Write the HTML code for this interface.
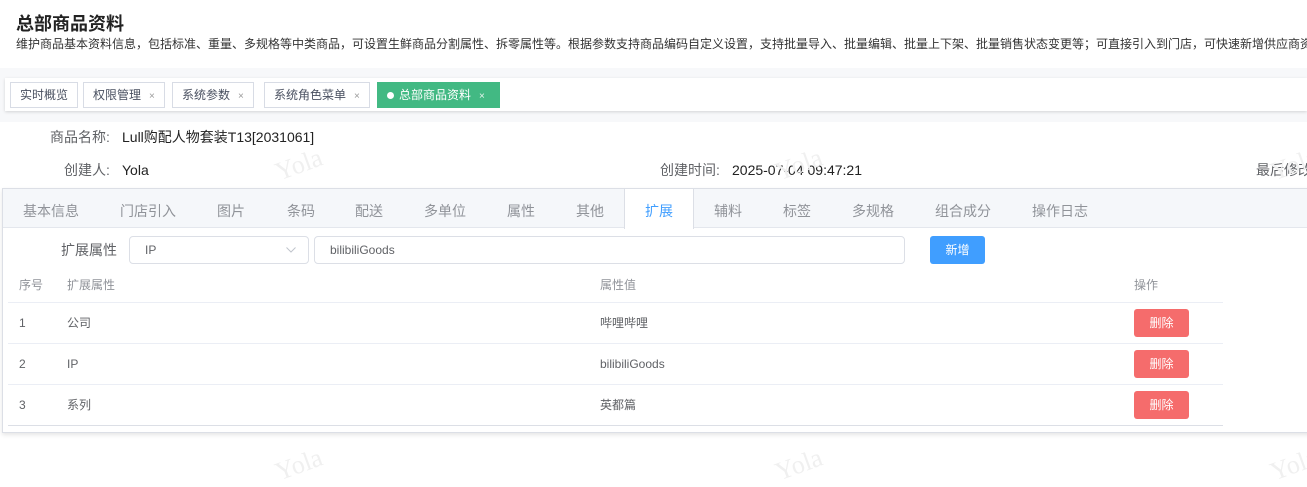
<!DOCTYPE html>
<html><head><meta charset="utf-8"><style>
*{box-sizing:border-box;margin:0;padding:0}
body{width:1307px;height:483px;overflow:hidden;background:#fff;font-family:"Liberation Sans","Noto Sans CJK SC",sans-serif;position:relative;color:#333}
.abs{position:absolute;white-space:nowrap}
.wm{position:absolute;color:#f0f0f0;font-family:"Liberation Serif",serif;font-size:26px;transform:rotate(-20deg)}
.tag{position:absolute;top:82px;height:26px;border:1px solid #d8dce5;background:#fff;font-size:12px;line-height:24px;padding:0 9px;color:#495060;white-space:nowrap}
.tag i{font-style:normal;font-size:10px;color:#999;margin-left:8px}
.tab{position:absolute;top:201px;font-size:14px;color:#909399;white-space:nowrap}
.th{font-size:12px;color:#909399;line-height:16px}
.td{font-size:12px;color:#606266;line-height:16px;height:16px}
.line{position:absolute;left:8px;width:1215px;height:1px;background:#ebeef5}
.del{position:absolute;left:1134px;width:55px;height:28px;background:#f56c6c;border-radius:3px;color:#fff;font-size:12px;line-height:28px;text-align:center}
.lbl{position:absolute;white-space:nowrap;font-size:14px;color:#606266;line-height:20px;height:20px}
.val{position:absolute;white-space:nowrap;font-size:14px;color:#222;line-height:20px;height:20px}
</style></head><body>
<div class="abs" style="left:16px;top:10px;font-size:18px;font-weight:bold;color:#222">总部商品资料</div>
<div class="abs" style="left:16px;top:35px;font-size:12px;color:#333">维护商品基本资料信息，包括标准、重量、多规格等中类商品，可设置生鲜商品分割属性、拆零属性等。根据参数支持商品编码自定义设置，支持批量导入、批量编辑、批量上下架、批量销售状态变更等；可直接引入到门店，可快速新增供应商资料</div>
<div class="abs" style="left:0;top:68px;width:1307px;height:54px;background:#f7f8fa"></div>
<div class="abs" style="left:5px;top:78px;width:1302px;height:33px;background:#fff;box-shadow:0 1px 3px rgba(0,0,0,.15)"></div>
<div class="tag" style="left:10px">实时概览</div>
<div class="tag" style="left:83px">权限管理<i>×</i></div>
<div class="tag" style="left:172px">系统参数<i>×</i></div>
<div class="tag" style="left:264px">系统角色菜单<i>×</i></div>
<div class="tag" style="left:377px;width:123px;background:#42b983;border-color:#42b983;color:#fff"><span style="display:inline-block;width:7px;height:7px;border-radius:50%;background:#fff;margin-right:5px"></span>总部商品资料<i style="color:#e8f5ee">×</i></div>
<div class="lbl" style="left:50px;top:127px">商品名称:</div><div class="val" style="left:122px;top:127px">Lull购配人物套装T13[2031061]</div>
<div class="lbl" style="left:64px;top:160px">创建人:</div><div class="val" style="left:122px;top:160px">Yola</div>
<div class="lbl" style="left:660px;top:160px">创建时间:</div><div class="val" style="left:732px;top:160px">2025-07-04 09:47:21</div>
<div class="lbl" style="left:1256px;top:160px">最后修改</div>
<div class="abs" style="left:2px;top:188px;width:1310px;height:245px;border:1px solid #dcdfe6;box-shadow:0 2px 4px rgba(0,0,0,.1);background:#fff"></div>
<div class="abs" style="left:3px;top:189px;width:1310px;height:39px;background:#f5f7fa;border-bottom:1px solid #e4e7ed"></div>
<div class="abs" style="left:624px;top:189px;width:70px;height:40px;background:#fff;border-left:1px solid #dcdfe6;border-right:1px solid #dcdfe6"></div>
<div class="tab" style="left:23px">基本信息</div>
<div class="tab" style="left:120px">门店引入</div>
<div class="tab" style="left:217px">图片</div>
<div class="tab" style="left:287px">条码</div>
<div class="tab" style="left:355px">配送</div>
<div class="tab" style="left:424px">多单位</div>
<div class="tab" style="left:507px">属性</div>
<div class="tab" style="left:576px">其他</div>
<div class="tab" style="left:645px;color:#409eff">扩展</div>
<div class="tab" style="left:714px">辅料</div>
<div class="tab" style="left:783px">标签</div>
<div class="tab" style="left:852px">多规格</div>
<div class="tab" style="left:935px">组合成分</div>
<div class="tab" style="left:1032px">操作日志</div>
<div class="abs" style="left:61px;top:240px;font-size:14px;color:#606266">扩展属性</div>
<div class="abs" style="left:129px;top:236px;width:180px;height:28px;border:1px solid #dcdfe6;border-radius:4px;font-size:12px;line-height:26px;padding-left:15px;color:#606266">IP<svg style="position:absolute;right:12px;top:10px" width="10" height="6" viewBox="0 0 10 6"><path d="M0.5 0.5L5 5L9.5 0.5" fill="none" stroke="#c0c4cc" stroke-width="1"/></svg></div>
<div class="abs" style="left:314px;top:236px;width:591px;height:28px;border:1px solid #dcdfe6;border-radius:4px;font-size:12px;line-height:26px;padding-left:15px;color:#606266">bilibiliGoods</div>
<div class="abs" style="left:930px;top:236px;width:55px;height:28px;background:#409eff;border-radius:3px;color:#fff;font-size:12px;line-height:28px;text-align:center">新增</div>
<div class="abs th" style="left:19px;top:277px">序号</div>
<div class="abs th" style="left:67px;top:277px">扩展属性</div>
<div class="abs th" style="left:600px;top:277px">属性值</div>
<div class="abs th" style="left:1134px;top:277px">操作</div>
<div class="line" style="top:302px"></div>
<div class="abs td" style="left:19px;top:315px">1</div><div class="abs td" style="left:67px;top:315px">公司</div><div class="abs td" style="left:600px;top:315px">哔哩哔哩</div><div class="del" style="top:309px">删除</div>
<div class="line" style="top:343px"></div>
<div class="abs td" style="left:19px;top:356px">2</div><div class="abs td" style="left:67px;top:356px">IP</div><div class="abs td" style="left:600px;top:356px">bilibiliGoods</div><div class="del" style="top:350px">删除</div>
<div class="line" style="top:384px"></div>
<div class="abs td" style="left:19px;top:397px">3</div><div class="abs td" style="left:67px;top:397px">系列</div><div class="abs td" style="left:600px;top:397px">英都篇</div><div class="del" style="top:391px">删除</div>
<div class="line" style="top:425px;background:#dcdfe6"></div>
<div class="wm" style="left:275px;top:150px">Yola</div>
<div class="wm" style="left:775px;top:150px">Yola</div>
<div class="wm" style="left:1270px;top:150px">Yola</div>
<div class="wm" style="left:275px;top:450px">Yola</div>
<div class="wm" style="left:775px;top:450px">Yola</div>
<div class="wm" style="left:1270px;top:450px">Yola</div>
</body></html>
